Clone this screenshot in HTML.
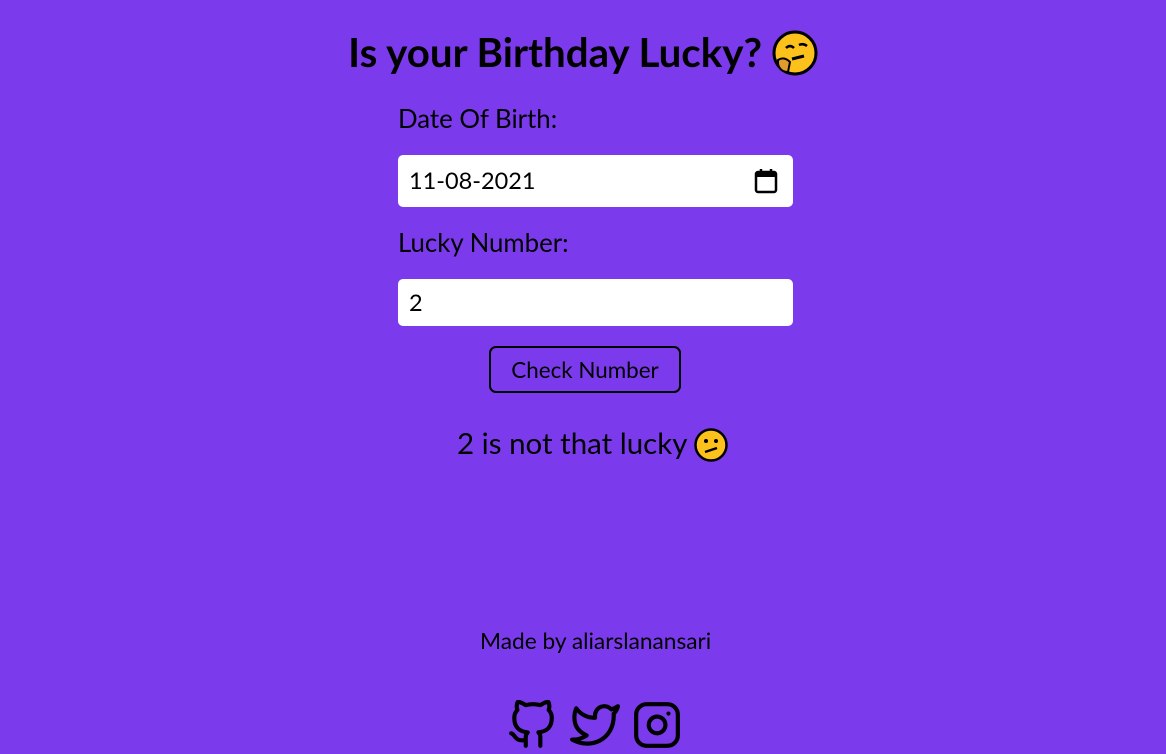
<!DOCTYPE html>
<html><head><meta charset="utf-8"><style>
*{margin:0;padding:0;box-sizing:border-box}
body{width:1166px;height:754px;background:#7c3aed;font-family:"Lato","Liberation Sans",sans-serif;color:#000;position:relative;overflow:hidden}
.a{position:absolute;white-space:nowrap}
h1{position:absolute;left:0;width:1166px;text-align:center;top:27px;font-size:40.3px;font-weight:bold}
.lbl{font-size:25.8px;left:398px}
.inp{position:absolute;left:398px;width:395px;background:#fff;border-radius:5px;font-size:23.5px;padding-left:11px;display:flex;align-items:center}
.btn{position:absolute;left:489px;top:346px;width:192px;height:47px;border:2px solid #000;border-radius:7px;font-size:22.4px;display:flex;align-items:center;justify-content:center}
svg.e{vertical-align:middle}
</style></head><body>
<h1>Is your Birthday Lucky? <svg class="e" width="46" height="46" viewBox="0 0 46 46" style="margin-top:-8px"><circle cx="23" cy="23" r="21" fill="#fcc21b" stroke="#000" stroke-width="3"/><path d="M14 18q4-4 8 0M27 15q4-2 8 1" stroke="#000" stroke-width="2.5" fill="none"/><path d="M20 29l12-3" stroke="#000" stroke-width="3"/><path d="M6 30q6-4 12 2l-2 10q-8 0-10-8z" fill="#e29b2a" stroke="#000" stroke-width="2"/></svg></h1>
<div class="a lbl" style="top:104px">Date Of Birth:</div>
<div class="inp" style="top:155px;height:52px">11-08-2021
<svg style="position:absolute;right:15px;top:13px" width="24" height="26" viewBox="0 0 24 26"><rect x="2" y="4" width="20" height="20" rx="2" fill="none" stroke="#000" stroke-width="2.5"/><rect x="2" y="4" width="20" height="5" fill="#000"/><path d="M7 1v5M17 1v5" stroke="#000" stroke-width="2.5"/></svg></div>
<div class="a lbl" style="top:228px">Lucky Number:</div>
<div class="inp" style="top:279px;height:47px">2</div>
<div class="btn">Check Number</div>
<div class="a" style="left:457px;top:426px;font-size:29.5px">2 is not that lucky <svg class="e" width="34" height="34" viewBox="0 0 34 34" style="margin-top:-4px"><circle cx="17" cy="17" r="15.5" fill="#fcc21b" stroke="#000" stroke-width="2.5"/><circle cx="12" cy="13" r="2"/><circle cx="22" cy="13" r="2"/><path d="M11 24l12-4" stroke="#000" stroke-width="2.5"/></svg></div>
<div class="a" style="left:480px;top:627px;font-size:22.7px">Made by aliarslanansari</div>
<svg class="a" style="left:507px;top:700px" width="50" height="50" viewBox="0 0 24 24" fill="none" stroke="#000" stroke-width="2" stroke-linecap="round" stroke-linejoin="round"><path d="M9 19c-5 1.5-5-2.5-7-3m14 6v-3.870a3.37 3.37 0 0 0-.94-2.61c3.14-.35 6.44-1.54 6.44-7A5.44 5.44 0 0 0 20 4.77 5.07 5.07 0 0 0 19.91 1S18.73.65 16 2.48a13.38 13.38 0 0 0-7 0C6.27.65 5.09 1 5.09 1A5.07 5.07 0 0 0 5 4.77a5.440 5.440 0 0 0-1.5 3.78c0 5.42 3.3 6.61 6.44 7A3.37 3.37 0 0 0 9 18.13V22"/></svg>
<svg class="a" style="left:569px;top:700px" width="52" height="50" viewBox="0 0 24 24" fill="none" stroke="#000" stroke-width="2" stroke-linecap="round" stroke-linejoin="round"><path d="M23 3a10.9 10.9 0 0 1-3.140 1.53 4.48 4.48 0 0 0-7.86 3v1A10.66 10.66 0 0 1 3 4s-4 9 5 13a11.64 11.64 0 0 1-7 2c9 5 20 0 20-11.5a4.5 4.5 0 0 0-.08-.83A7.72 7.72 0 0 0 23 3z"/></svg>
<svg class="a" style="left:632px;top:700px" width="50" height="50" viewBox="0 0 24 24" fill="none" stroke="#000" stroke-width="2" stroke-linecap="round" stroke-linejoin="round"><rect x="2" y="2" width="20" height="20" rx="5"/><path d="M16 11.37A4 4 0 1 1 12.63 8 4 4 0 0 1 16 11.37z"/><line x1="17.5" y1="6.5" x2="17.51" y2="6.5"/></svg>
</body></html>
